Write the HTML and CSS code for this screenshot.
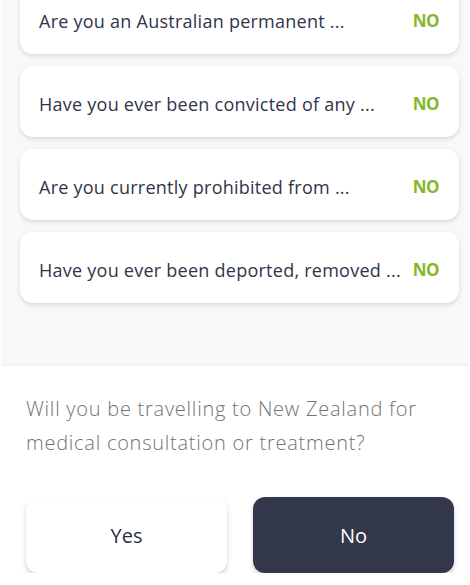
FILE: index.html
```html
<!DOCTYPE html>
<html>
<head>
<meta charset="utf-8">
<link rel="stylesheet" href="styles.css">
</head>
<body>
<div class="top">
  <div class="list">
    <div class="card"><span class="q">Are you an Australian permanent ...</span><span class="a">NO</span></div>
    <div class="card"><span class="q">Have you ever been convicted of any ...</span><span class="a">NO</span></div>
    <div class="card"><span class="q">Are you currently prohibited from ...</span><span class="a">NO</span></div>
    <div class="card"><span class="q">Have you ever been deported, removed ...</span><span class="a">NO</span></div>
  </div>
</div>
<div class="sheet">
  <p class="question">Will you be travelling to New Zealand for medical consultation or treatment?</p>
  <div class="buttons">
    <button class="btn yes">Yes</button>
    <button class="btn no">No</button>
  </div>
</div>
</body>
</html>
```
FILE: styles.css
```css
html, body {
  margin: 0;
  padding: 0;
  background: #ffffff;
  font-family: "Open Sans", "Noto Sans", sans-serif;
  overflow: hidden;
}
.top {
  margin: 0 2px 0 1px;
  height: 366px;
  background: #f8f8f8;
  overflow: hidden;
  box-shadow: inset 0 -3px 3px -2px rgba(0,0,0,0.06);
}
.list {
  margin-top: -17px;
  padding: 0 9px 0 19px;
  display: flex;
  flex-direction: column;
  gap: 12px;
}
.card {
  height: 71px;
  box-sizing: border-box;
  padding: 4px 20px 0 19px;
  background: #ffffff;
  border-radius: 13px;
  box-shadow: 0 2px 4px rgba(0,0,0,0.13);
  display: flex;
  align-items: center;
  justify-content: space-between;
}
.q {
  font-size: 18px;
  letter-spacing: 0.25px;
  color: #30354a;
  white-space: nowrap;
}
.a {
  font-size: 17px;
  font-weight: 700;
  letter-spacing: -0.5px;
  color: #86b72b;
}
.sheet {
  padding: 26px 30px 0 26px;
}
.question {
  margin: 0;
  font-size: 20px;
  line-height: 34px;
  font-weight: 300;
  letter-spacing: 0.75px;
  color: #737373;
}
.buttons {
  margin-top: 37px;
  display: flex;
  gap: 26px;
}
.btn {
  flex: none;
  width: 201px;
  height: 76px;
  border: none;
  border-radius: 12px;
  font-family: "Open Sans", "Noto Sans", sans-serif;
  font-size: 20px;
  box-shadow: 0 3px 5px rgba(0,0,0,0.18);
}
.yes {
  background: #ffffff;
  color: #2c3043;
}
.no {
  background: #323849;
  color: #ffffff;
}
```
